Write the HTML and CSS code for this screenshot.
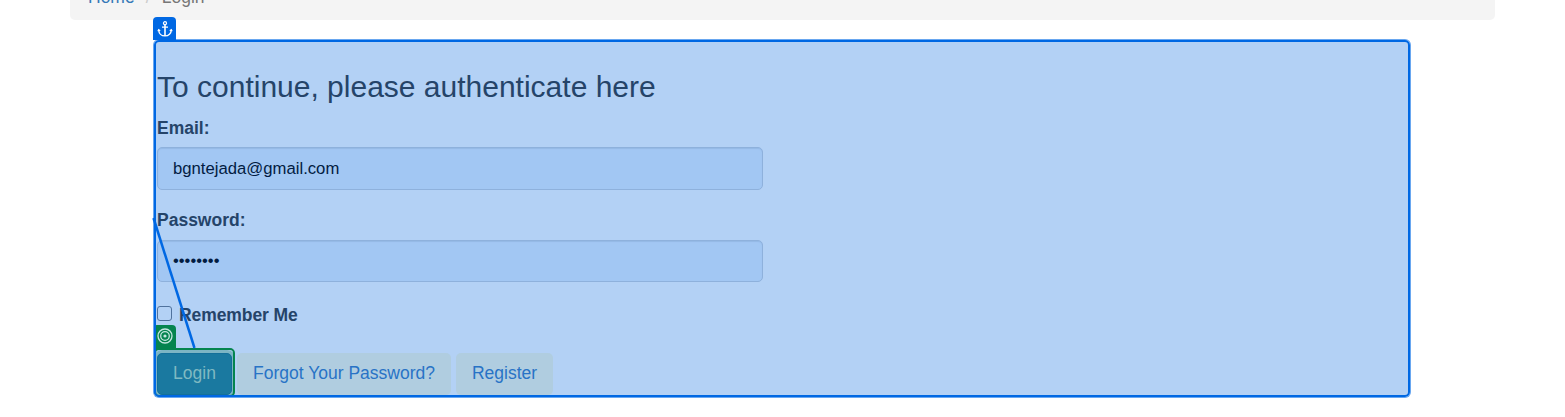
FILE: index.html
```html
<!DOCTYPE html>
<html lang="en">
<head>
<meta charset="utf-8">
<title>Login</title>
<link rel="stylesheet" href="styles.css">
</head>
<body>
<nav class="breadcrumb"><a class="crumb">Home</a><span class="divider">/</span><span>Login</span></nav>
<main class="panel">
  <form class="form">
    <h1 class="title">To continue, please authenticate here</h1>
    <label class="label">Email:</label>
    <div class="field">bgntejada@gmail.com</div>
    <label class="label second">Password:</label>
    <div class="field password">••••••••</div>
    <label class="remember"><span class="check"></span><span>Remember Me</span></label>
    <div class="actions">
      <a class="btn primary">Login</a>
      <a class="btn forgot">Forgot Your Password?</a>
      <a class="btn register">Register</a>
    </div>
  </form>
</main>
<div class="tag target">
  <svg width="16" height="16" viewBox="0 0 16 16" fill="none" stroke="#c5e6e0" stroke-width="1.3"><circle cx="8" cy="8" r="7"/><circle cx="8" cy="8" r="4.300"/><circle cx="8" cy="8" r="1.600" fill="#c5e6e0" stroke="none"/></svg>
</div>
<div class="target-box"></div>
<div class="anchor-box"></div>
<div class="tag anchor">
  <svg width="16" height="16" viewBox="0 0 16 16" fill="none" stroke="#fff" stroke-width="1.3"><circle cx="8" cy="2.200" r="1.500"/><path d="M8 3.700v11.300" stroke-width="1.600"/><path d="M5 6.200h6M1.700 8.700c0 3.700 2.700 6.200 6.300 6.200s6.300-2.500 6.300-6.200M.9 10.200l.8-1.500 1.500 1M15.100 10.200l-.8-1.500-1.500 1"/></svg>
</div>
<svg class="connector" width="1565" height="417"><path d="M153.500 218L194.500 348" stroke="#0068e3" stroke-width="2.500"/></svg>
</body>
</html>
```
FILE: styles.css
```css
* { box-sizing: border-box; }
body {
  margin: 0;
  height: 417px;
  overflow: hidden;
  position: relative;
  background: #fff;
  font-family: "Liberation Sans", Arial, sans-serif;
  font-size: 17.5px;
  color: #254469;
}
.breadcrumb {
  display: flex;
  width: 1425px;
  height: 40px;
  margin: -20px 0 0 70px;
  padding: 7px 18px 0;
  line-height: 20px;
  background: #f4f4f4;
  border-radius: 5px;
  color: #777;
}
.crumb { color: #3579b8; }
.divider { width: 27px; padding-left: 11px; color: #ccc; }
.panel {
  width: 1256px;
  height: 357px;
  margin: 20px 0 0 154px;
  padding: 30px 3px 0;
  background: #b3d1f5;
  border-radius: 6px;
  overflow: hidden;
}
.form { display: flex; flex-direction: column; align-items: flex-start; }
.title { margin: 0; font-size: 30px; font-weight: 400; line-height: 34px; white-space: nowrap; }
.label { margin-top: 14px; line-height: 20px; font-weight: 700; }
.field {
  width: 606px;
  height: 43px;
  margin-top: 9px;
  padding: 0 15px;
  line-height: 41px;
  border: 1px solid #8eb1dc;
  border-radius: 5px;
  background: #a2c7f3;
  box-shadow: inset 0 1px 1px #94b9e5;
  color: #021c42;
  font-size: 16.7px;
}
.second { margin-top: 20px; }
.password { height: 42px; margin-top: 10px; font-size: 16.6px; line-height: 39px; }
.remember { display: flex; margin-top: 23px; line-height: 20px; font-weight: 700; letter-spacing: -0.08px; }
.check { width: 15px; height: 15px; margin: 1px 7px 0 0; border: 1px solid #50729d; border-radius: 3px; background: #b3d1f5; }
.actions { display: flex; gap: 5px; margin-top: 28px; }
.btn {
  height: 42px;
  line-height: 40px;
  text-align: center;
  border-radius: 5px;
  background: #b0cde0;
  color: #2873c6;
  white-space: nowrap;
}
.primary { width: 75px; background: #1a79a0; color: #80bac2; border: 1px solid #14709a; line-height: 38px; box-shadow: 0 0 0 3px #7cb5c4; }
.forgot { width: 214px; }
.register { width: 97px; }
.anchor-box, .target-box, .tag, .connector { position: absolute; }
.anchor-box {
  left: 154px; top: 40px; width: 1256px; height: 357px;
  border: 2px solid #0068e3;
  border-radius: 5px;
  box-shadow: 0 0 0 1px #69a7f0;
}
.target-box {
  left: 154px; top: 348px; width: 81px; height: 49px;
  border: 2px solid #05844f;
  border-radius: 5px;
}
.tag { display: flex; align-items: center; justify-content: center; width: 23px; height: 23px; border-radius: 4px 4px 0 0; }
.anchor { left: 153px; top: 17px; background: #0068e3; }
.target { left: 153px; top: 325px; height: 24px; padding-bottom: 2px; background: #05844f; }
.connector { left: 0; top: 0; }
```
